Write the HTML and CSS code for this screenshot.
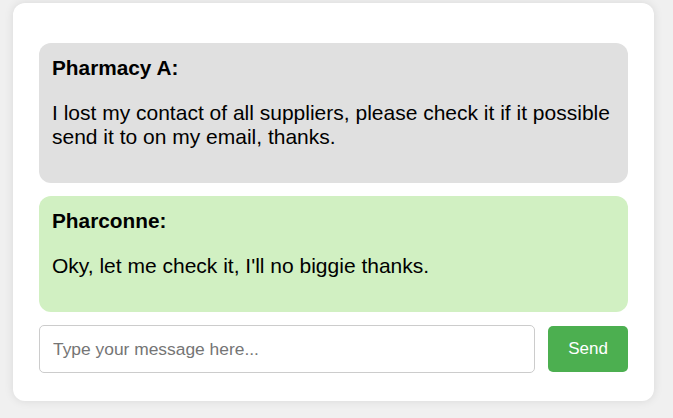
FILE: index.html
```html
<!DOCTYPE html>
<html>
<head>
<meta charset="utf-8">
<link rel="stylesheet" href="styles.css">
</head>
<body>
<div class="chat">
  <div class="messages">
    <div class="message received">
      <strong class="sender">Pharmacy A:</strong>
      <p class="text">I lost my contact of all suppliers, please check it if it possible send it to on my email, thanks.</p>
    </div>
    <div class="message sent">
      <strong class="sender">Pharconne:</strong>
      <p class="text">Oky, let me check it, I'll no biggie thanks.</p>
    </div>
  </div>
  <form class="composer" onsubmit="return false">
    <input class="input" type="text" placeholder="Type your message here...">
    <button class="send" type="submit">Send</button>
  </form>
</div>
</body>
</html>
```
FILE: styles.css
```css
html, body {
  margin: 0;
  padding: 0;
}
body {
  background: #f0f0f0;
  font-family: "Liberation Sans", Arial, sans-serif;
  padding: 3px 19px 17px 13px;
}
.chat {
  background: #fff;
  border-radius: 12px;
  box-shadow: 0 0 10px rgba(0, 0, 0, 0.1);
  padding: 40px 26px 28px 26px;
}
.messages {
  display: flex;
  flex-direction: column;
  gap: 13px;
}
.message {
  border-radius: 12px;
  padding: 13px 13px;
  color: #000;
  line-height: 24px;
}
.received { background: #e0e0e0; }
.sent { background: #d1f0c2; }
.sender {
  display: block;
  font-weight: bold;
  font-size: 20.8px;
}
.text {
  margin: 21px 0 21px 0;
  font-size: 21px;
}
.composer {
  display: flex;
  gap: 13px;
  margin: 13px 0 0 0;
  align-items: center;
}
.input {
  flex: 1;
  height: 48px;
  box-sizing: border-box;
  border: 1px solid #ccc;
  border-radius: 5px;
  padding: 0 13px;
  font-family: "Liberation Sans", Arial, sans-serif;
  font-size: 17.4px;
}
.input::placeholder { color: #757575; }
.send {
  width: 80px;
  height: 46px;
  border: none;
  border-radius: 5px;
  background: #4caf50;
  color: #fff;
  font-family: "Liberation Sans", Arial, sans-serif;
  font-size: 17px;
}
```
